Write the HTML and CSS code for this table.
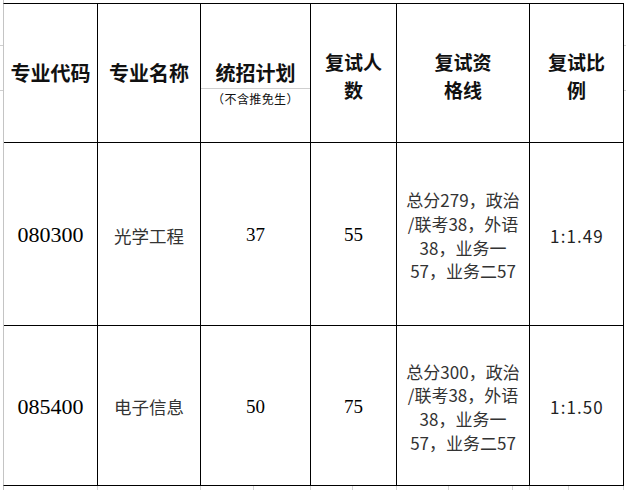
FILE: index.html
```html
<!DOCTYPE html>
<html lang="zh-CN">
<head>
<meta charset="utf-8">
<title>复试分数线</title>
<link rel="stylesheet" href="styles.css">
</head>
<body>
<div class="sheet">
  <div class="table">
    <div class="cell head">专业代码</div>
    <div class="cell head">专业名称</div>
    <div class="cell head split">
      <div class="split-top">统招计划</div>
      <div class="split-bottom">（不含推免生）</div>
    </div>
    <div class="cell head two"><div class="ln">复试人</div><div class="ln">数</div></div>
    <div class="cell head two"><div class="ln">复试资</div><div class="ln">格线</div></div>
    <div class="cell head two"><div class="ln">复试比</div><div class="ln">例</div></div>

    <div class="cell code">080300</div>
    <div class="cell name">光学工程</div>
    <div class="cell num">37</div>
    <div class="cell num">55</div>
    <div class="cell line">总分279，政治<br>/联考38，外语<br>38，业务一<br>57，业务二57</div>
    <div class="cell ratio">1:1.49</div>

    <div class="cell code">085400</div>
    <div class="cell name">电子信息</div>
    <div class="cell num">50</div>
    <div class="cell num">75</div>
    <div class="cell line">总分300，政治<br>/联考38，外语<br>38，业务一<br>57，业务二57</div>
    <div class="cell ratio">1:1.50</div>
  </div>
  <div class="foot"></div>
</div>
</body>
</html>
```
FILE: styles.css
```css
html, body {
  margin: 0;
  padding: 0;
}
body {
  width: 626px;
  height: 490px;
  overflow: hidden;
  background-color: #fff;
  background-image:
    linear-gradient(#cfcfcf, #cfcfcf),
    linear-gradient(#cfcfcf, #cfcfcf),
    linear-gradient(#c4c4c4, #c4c4c4);
  background-size: 100% 1px, 100% 1px, 1px 100%;
  background-position: 0 45px, 0 90px, 3px 0;
  background-repeat: no-repeat;
  font-family: "Noto Sans CJK SC", sans-serif;
}
.sheet {
  padding-top: 3px;
  padding-left: 3px;
}
.table {
  display: grid;
  grid-template-columns: 93px 102px 109px 85px 132px 93px;
  grid-template-rows: 138px 182px 159px;
  gap: 1px;
  width: 619px;
  background: #000;
  border-top: 1px solid #000;
  border-bottom: 1px solid #000;
  border-right: 1px solid #000;
  border-left: 1px solid #c4c4c4;
}
.cell {
  background: #fff;
  display: flex;
  align-items: center;
  justify-content: center;
  text-align: center;
}
.head {
  font-family: "Noto Sans CJK SC", sans-serif;
  font-weight: 700;
  font-size: 20px;
  color: #111;
  line-height: 26px;
}
.two {
  flex-direction: column;
  padding-top: 5px;
  box-sizing: border-box;
}
.ln {
  height: 27.6px;
  line-height: 27.6px;
  font-size: 19px;
}
.split {
  flex-direction: column;
  align-items: stretch;
  justify-content: flex-start;
}
.split-top {
  height: 85px;
  display: flex;
  align-items: flex-end;
  justify-content: center;
  line-height: 26px;
  border-bottom: 1px solid #cfcfcf;
  box-sizing: border-box;
  padding-bottom: 2px;
}
.split-bottom {
  font-weight: 400;
  font-size: 12px;
  letter-spacing: 0.4px;
  line-height: 18px;
  color: #111;
  padding-top: 1px;
}
.code {
  font-family: "Liberation Serif", serif;
  font-size: 22px;
  color: #000;
  padding-top: 2px;
}
.name {
  font-size: 17.5px;
  color: #333;
  padding-top: 2px;
}
.num {
  font-family: "Liberation Serif", serif;
  font-size: 19px;
  color: #000;
  padding-top: 2px;
}
.line {
  font-size: 17px;
  line-height: 23.6px;
  color: #333;
  padding-top: 3px;
}
.ratio {
  font-family: "Noto Sans CJK SC", sans-serif;
  font-size: 17px;
  letter-spacing: 1.1px;
  color: #222;
  padding-top: 2px;
  padding-left: 1px;
}
.foot {
  height: 6px;
  margin-left: -3px;
  background-image:
    linear-gradient(#d4d4d4, #d4d4d4),
    linear-gradient(#d4d4d4, #d4d4d4),
    linear-gradient(#d4d4d4, #d4d4d4),
    linear-gradient(#d4d4d4, #d4d4d4),
    linear-gradient(#d4d4d4, #d4d4d4),
    linear-gradient(#d4d4d4, #d4d4d4),
    linear-gradient(#d4d4d4, #d4d4d4),
    linear-gradient(#d4d4d4, #d4d4d4),
    linear-gradient(#d4d4d4, #d4d4d4),
    linear-gradient(#d4d4d4, #d4d4d4),
    linear-gradient(#d4d4d4, #d4d4d4);
  background-size: 1px 100%;
  background-repeat: no-repeat;
  background-position: 97px 0, 200px 0, 253px 0, 310px 0, 352px 0, 396px 0, 448px 0, 512px 0, 529px 0, 568px 0, 623px 0;
}
```
